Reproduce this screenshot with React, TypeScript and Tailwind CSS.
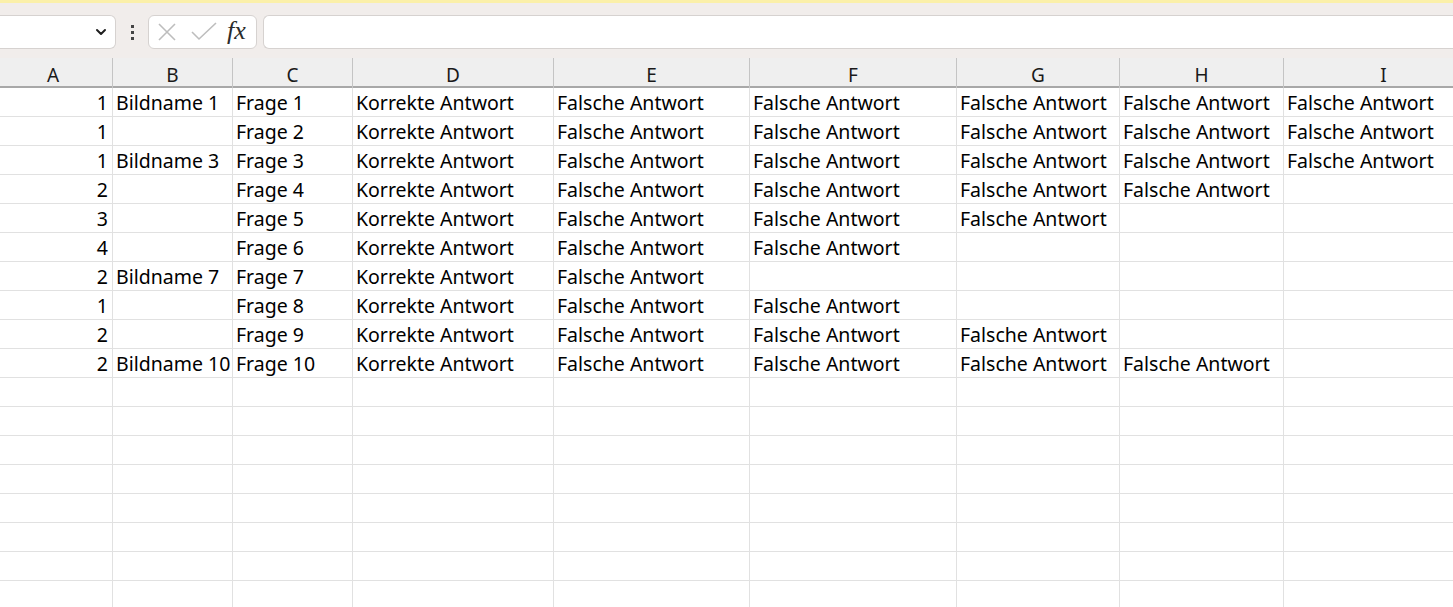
import React from "react";

const cols = [
  { key: "A", w: 113 },
  { key: "B", w: 120 },
  { key: "C", w: 120 },
  { key: "D", w: 201 },
  { key: "E", w: 196 },
  { key: "F", w: 207 },
  { key: "G", w: 163 },
  { key: "H", w: 164 },
  { key: "I", w: 200 },
];

const F = "Falsche Antwort";
const empty = ["", "", "", "", "", "", "", "", ""];

const rows: (string | number)[][] = [
  [1, "Bildname 1", "Frage 1", "Korrekte Antwort", F, F, F, F, F],
  [1, "", "Frage 2", "Korrekte Antwort", F, F, F, F, F],
  [1, "Bildname 3", "Frage 3", "Korrekte Antwort", F, F, F, F, F],
  [2, "", "Frage 4", "Korrekte Antwort", F, F, F, F, ""],
  [3, "", "Frage 5", "Korrekte Antwort", F, F, F, "", ""],
  [4, "", "Frage 6", "Korrekte Antwort", F, F, "", "", ""],
  [2, "Bildname 7", "Frage 7", "Korrekte Antwort", F, "", "", "", ""],
  [1, "", "Frage 8", "Korrekte Antwort", F, F, "", "", ""],
  [2, "", "Frage 9", "Korrekte Antwort", F, F, F, "", ""],
  [2, "Bildname 10", "Frage 10", "Korrekte Antwort", F, F, F, F, ""],
  empty, empty, empty, empty, empty, empty, empty, empty,
];

const gridTemplate = "113px 120px 120px 201px 196px 207px 163px 164px 200px";

function Toolbar() {
  return (
    <div className="h-[58px] bg-[#f1edeb] border-t-[3px] border-[#fbf0a9] flex items-start pt-[12px]">
      <div className="w-[116px] h-[34px] bg-white border border-[#d6d2d0] rounded-r-[6px] border-l-0 flex items-center justify-end pr-[6px]">
        <svg width="14" height="14" viewBox="0 0 14 14" className="mr-[1px]">
          <path d="M3 5l4 4 4-4" fill="none" stroke="#1f1f1f" strokeWidth="2" strokeLinecap="round" strokeLinejoin="round" />
        </svg>
      </div>
      <div className="w-[32px] h-[34px] flex flex-col items-center justify-center gap-[3px]">
        <div className="w-[3px] h-[3px] bg-[#444]" />
        <div className="w-[3px] h-[3px] bg-[#444]" />
        <div className="w-[3px] h-[3px] bg-[#444]" />
      </div>
      <div className="w-[109px] h-[34px] bg-white border border-[#d6d2d0] rounded-[6px] flex items-center pl-[8px]">
        <svg width="20" height="20" viewBox="0 0 20 20">
          <path d="M2 2l16 16M18 2L2 18" stroke="#bdbdbd" strokeWidth="1.6" fill="none" />
        </svg>
        <svg width="26" height="20" viewBox="0 0 26 20" className="ml-[14px]">
          <path d="M1 10l7 7L25 1" stroke="#bdbdbd" strokeWidth="1.6" fill="none" />
        </svg>
        <span className="ml-[10px] text-[26px] italic text-[#2b2b2b] leading-none pb-[2px]" style={{ fontFamily: "'Liberation Serif', serif" }}>
          fx
        </span>
      </div>
      <div className="ml-[6px] flex-1 h-[34px] bg-white border border-[#d6d2d0] border-r-0 rounded-l-[6px]" />
    </div>
  );
}

export default function App() {
  return (
    <div className="w-[1453px] h-[607px] overflow-hidden bg-white" style={{ fontFamily: "'Noto Sans', sans-serif" }}>
      <Toolbar />
      <div className="grid h-[30px] bg-[#efefef] border-b-2 border-[#a8a8a8]" style={{ gridTemplateColumns: gridTemplate }}>
        {cols.map((c) => (
          <div
            key={c.key}
            className={
              "flex items-center justify-center pt-[3px] border-r border-[#c4c4c4] text-[19px] text-[#1a1a1a] " +
              (c.key === "A" ? "pr-[6px]" : "")
            }
          >
            {c.key}
          </div>
        ))}
      </div>
      {rows.map((r, i) => (
        <div key={i} className="grid h-[29px] border-b border-[#e1e1e1]" style={{ gridTemplateColumns: gridTemplate }}>
          {r.map((v, j) => (
            <div
              key={j}
              className={
                "flex items-center border-r border-[#e1e1e1] text-[19.5px] text-black whitespace-nowrap overflow-visible " +
                (j === 0 ? "justify-end pr-[4px]" : "pl-[3px]")
              }
            >
              {v}
            </div>
          ))}
        </div>
      ))}
    </div>
  );
}
